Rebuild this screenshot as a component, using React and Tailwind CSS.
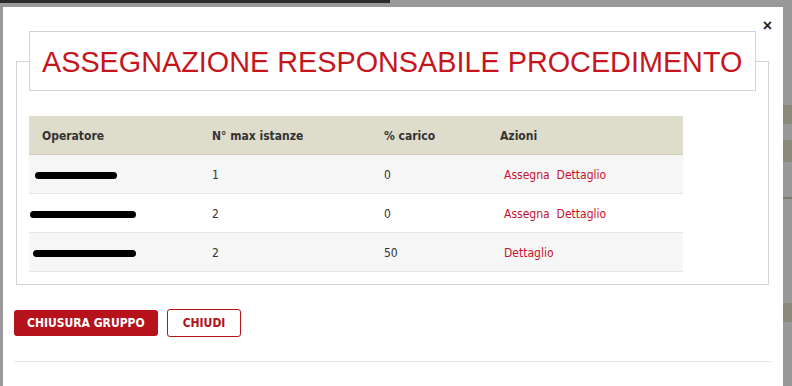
import React from 'react'

const rows = [
  { blot: [6, 82], max: 1, load: 0, assign: true },
  { blot: [1, 106], max: 2, load: 0, assign: true },
  { blot: [4, 103], max: 2, load: 50, assign: false },
]

function Blot({ left, width }) {
  return <div className="h-[7px] rounded-full bg-black" style={{ marginLeft: left, width }} />
}

export default function App() {
  return (
    <div className="w-[792px] h-[386px] overflow-hidden bg-[#999999] relative" style={{ fontFamily: '"DejaVu Sans Condensed", "DejaVu Sans", sans-serif' }}>
      {/* page behind overlay */}
      <div className="h-[7px] flex">
        <div className="w-[390px] h-[3px] bg-[#2a2a2a]" />
      </div>
      <div className="absolute right-0 top-[105px] w-[9px] h-[19px] bg-[#8a8a7c]" />
      <div className="absolute right-0 top-[140px] w-[9px] h-[22px] bg-[#8a8a7c] overflow-hidden" />
      <div className="absolute right-0 top-[197px] w-[9px] h-[2px] bg-[#7a7a70]" />
      <div className="absolute right-0 top-[303px] w-[9px] h-[19px] bg-[#8a8a7c]" />

      <div className="relative ml-[3px] w-[780px] h-[379px] bg-white pt-[1px]">
        <button className="absolute right-[11px] top-[11px] text-[16px] font-bold text-[#222] leading-none" style={{ fontFamily: '"Liberation Sans", sans-serif' }}>×</button>

        <fieldset className="ml-[13px] mt-[23px] w-[753px] border border-[#cfd3da] px-[12px] pb-[12px]">
          <legend className="w-[727px] h-[60px] border border-[#cfd3da] pl-[12px] flex items-center">
            <span className="whitespace-nowrap text-[28.8px] text-[#c4161c] leading-none mt-[2px]" style={{ fontFamily: '"Liberation Sans", Arial, sans-serif' }}>
              ASSEGNAZIONE RESPONSABILE PROCEDIMENTO
            </span>
          </legend>

          <div className="mt-[25px] w-[654px] text-[12px] text-[#333]">
            <div className="flex h-[39px] items-center pt-[2px] bg-[#dedccb] border-b border-[#d0ceb9] font-bold text-[12px] text-[#333]">
              <div className="w-[170px] pl-[13px]">Operatore</div>
              <div className="w-[172px] pl-[13px]">N° max istanze</div>
              <div className="w-[116px] pl-[13px]">% carico</div>
              <div className="flex-1 pl-[13px]">Azioni</div>
            </div>
            {rows.map((r, i) => (
              <div key={i} className={`flex h-[39px] items-center pt-[2px] border-b border-[#e6e6e6] ${i % 2 === 0 ? 'bg-[#f6f6f6]' : 'bg-white'}`}>
                <div className="w-[170px]"><Blot left={r.blot[0]} width={r.blot[1]} /></div>
                <div className="w-[172px] pl-[13px]">{r.max}</div>
                <div className="w-[116px] pl-[13px]">{r.load}</div>
                <div className="flex-1 pl-[17px] flex gap-[7px] text-[#c8102e]">
                  {r.assign && <span>Assegna</span>}
                  <span>Dettaglio</span>
                </div>
              </div>
            ))}
          </div>
        </fieldset>

        <div className="flex items-center gap-[9px] ml-[11px] mt-[24px]">
          <button className="h-[26px] px-[13px] rounded-[3px] bg-[#b5121b] text-white text-[12px] font-bold">CHIUSURA GRUPPO</button>
          <button className="h-[28px] px-[15px] rounded-[3px] border border-[#b5121b] text-[#b5121b] text-[12px] font-bold">CHIUDI</button>
        </div>

        <div className="ml-[11px] mt-[24px] w-[757px] h-[1px] bg-[#e8e8e8]" />
      </div>
    </div>
  )
}
